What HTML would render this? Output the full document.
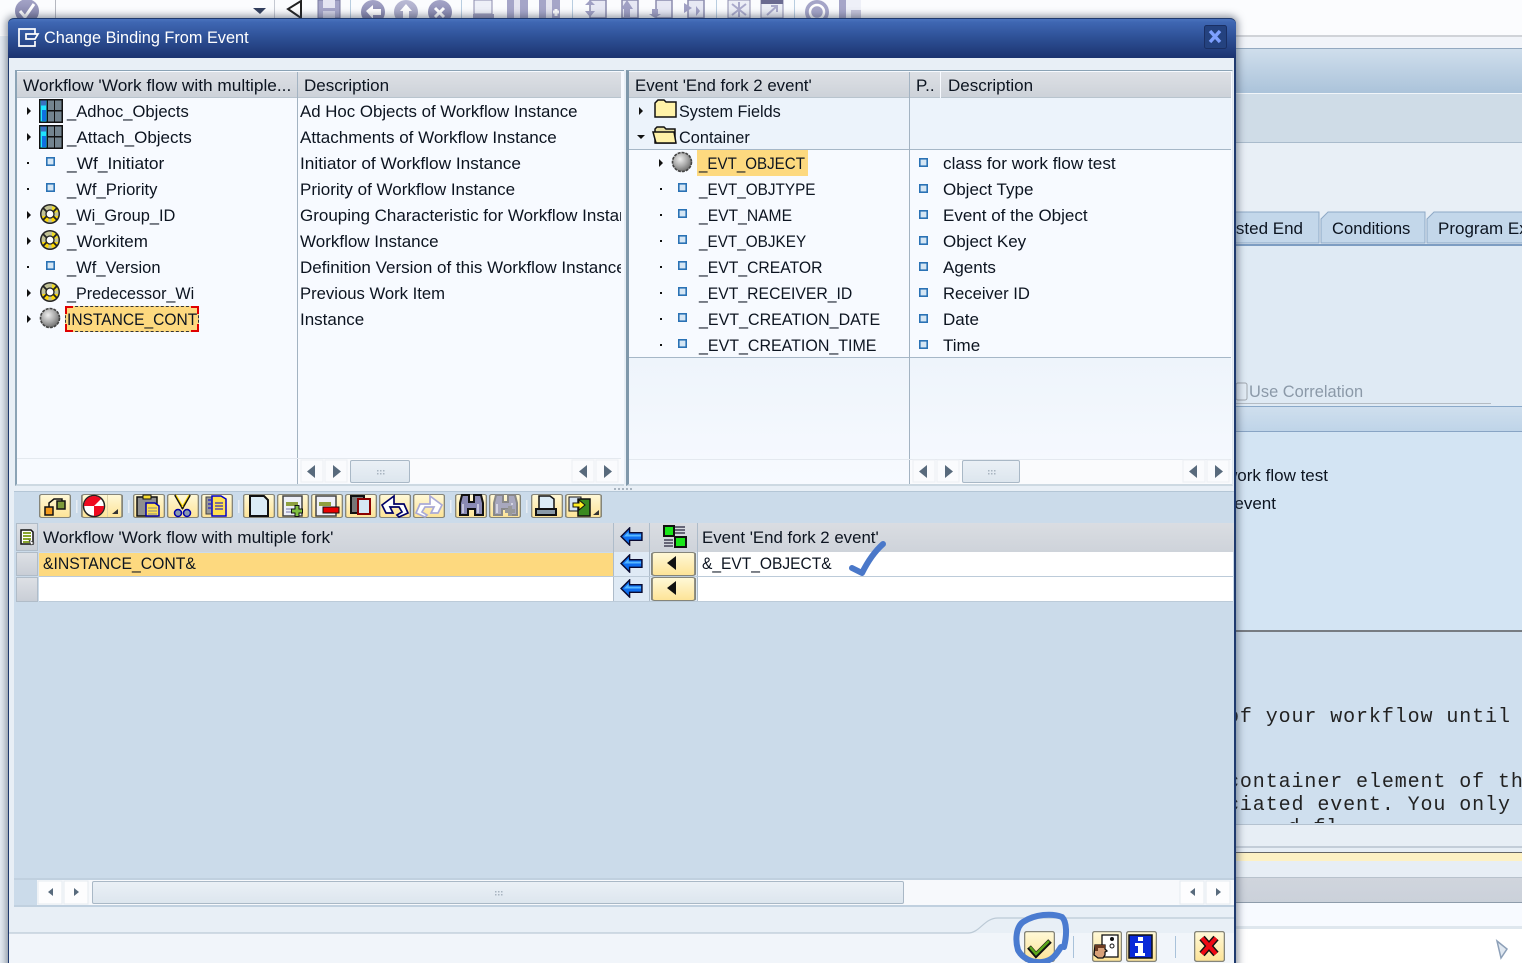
<!DOCTYPE html>
<html><head><meta charset="utf-8"><title>Change Binding From Event</title>
<style>
html,body{margin:0;padding:0;width:1522px;height:963px;overflow:hidden;background:#fff}
body{position:relative;font-family:"Liberation Sans",sans-serif;color:#0c1420}
.b{position:absolute}
.t{position:absolute;white-space:nowrap;font-size:17px;line-height:26px;height:26px;transform-origin:0 0}
svg{position:absolute;left:0;top:0}
.m{position:absolute;white-space:pre;font-family:"Liberation Mono",monospace;font-size:20px;letter-spacing:.9px;line-height:22px;color:#222}
</style></head><body>

<!-- background application -->
<div class="b" style="left:0;top:0;width:1522px;height:35px;background:#fbfcfe"></div>
<div class="b" style="left:1236px;top:35px;width:286px;height:2px;background:#d0d3d8"></div>
<div class="b" style="left:1236px;top:37px;width:286px;height:11px;background:#f1f4f9"></div>
<div class="b" style="left:1236px;top:48px;width:286px;height:45px;background:linear-gradient(#cfdeec,#abc3da);border-top:1px solid #93a9c0;box-sizing:border-box"></div>
<div class="b" style="left:1236px;top:93px;width:286px;height:50px;background:#cfdce7;border-top:1px solid #f1f5f9;border-bottom:1px solid #a9bbcc;box-sizing:border-box"></div>
<div class="b" style="left:1236px;top:143px;width:286px;height:101px;background:#e8eff6"></div>
<div class="b" style="left:1236px;top:244px;width:286px;height:162px;background:#dfeaf4;border-top:2px solid #7d9dc2;box-sizing:border-box"></div>
<div class="b" style="left:1236px;top:406px;width:286px;height:26px;background:linear-gradient(#cfdfee,#bfd4e8);border-top:1px solid #8aa9c9;border-bottom:1px solid #88a4c4;box-sizing:border-box"></div>
<div class="b" style="left:1236px;top:432px;width:286px;height:198px;background:#d3e4f3"></div>
<div class="b" style="left:1236px;top:630px;width:286px;height:2px;background:#777c82"></div>
<div class="b" style="left:1236px;top:632px;width:286px;height:192px;background:#cfdfee"></div>
<div class="b" style="left:1236px;top:824px;width:286px;height:105px;background:#e7eef5;border-top:1px solid #b4c2d0;box-sizing:border-box"></div>
<div class="b" style="left:1236px;top:846px;width:286px;height:2px;background:#c3cdd8"></div>
<div class="b" style="left:1236px;top:852px;width:286px;height:1px;background:#666"></div>
<div class="b" style="left:1236px;top:853px;width:286px;height:8px;background:#fdf1c4"></div>
<div class="b" style="left:1236px;top:877px;width:286px;height:26px;background:linear-gradient(#d0d5dd,#cbd1da);border-top:1px solid #b8c2cc;border-bottom:1px solid #8e9cab;box-sizing:border-box"></div>
<div class="b" style="left:1236px;top:903px;width:286px;height:23px;background:#f7faff"></div>
<div class="b" style="left:1236px;top:926px;width:286px;height:3px;background:#dfe7ee"></div>
<div class="b" style="left:1236px;top:929px;width:286px;height:34px;background:#fff"></div>
<div class="b" style="left:0;top:36px;width:8px;height:927px;background:#e8eff6"></div>

<svg width="1522" height="18" viewBox="0 0 1522 18" style="height:18px">
<defs><linearGradient id="gg" x1="0" y1="0" x2="0" y2="1"><stop offset="0" stop-color="#a5a5c8"/><stop offset="1" stop-color="#7a7aa2"/></linearGradient></defs>
<circle cx="27" cy="11" r="12" fill="url(#gg)"/><path d="M20 11l5 6 9-13" stroke="#fff" stroke-width="3" fill="none"/>
<rect x="55" y="0" width="1" height="18" fill="#b5b8c0"/>
<path d="M253 8h13l-6 6z" fill="#33405e"/><rect x="274" y="0" width="1" height="18" fill="#c5c9d2"/>
<path d="M301 1v17l-13-9z" fill="#fff" stroke="#222" stroke-width="2"/>
<rect x="318" y="0" width="22" height="18" fill="#a5a5c8" stroke="#7a7aa0"/><rect x="323" y="0" width="12" height="8" fill="#e5e5f2"/><rect x="323" y="11" width="12" height="7" fill="#d0d0e4"/>
<rect x="350" y="0" width="1" height="18" fill="#b8cde0"/>
<circle cx="373" cy="12" r="12" fill="url(#gg)"/><path d="M366 11l7-6v4h8v6h-8v4z" fill="#fff"/>
<circle cx="406" cy="12" r="12" fill="url(#gg)" opacity=".75"/><path d="M406 4l6 7h-3v7h-6v-7h-3z" fill="#fff"/>
<circle cx="440" cy="12" r="12" fill="url(#gg)"/><path d="M435 8l9 9M444 8l-9 9" stroke="#fff" stroke-width="3"/>
<rect x="461" y="0" width="1" height="18" fill="#b8cde0"/>
<path d="M474 0h18v14h-18z" fill="#eef0f8" stroke="#8c8cae"/><rect x="473" y="14" width="21" height="4" fill="#9c9cbc"/>
<rect x="507" y="0" width="21" height="18" fill="#a5a5c8"/><rect x="514" y="0" width="6" height="18" fill="#e4e4f0"/>
<rect x="539" y="0" width="21" height="18" fill="#a5a5c8"/><rect x="546" y="0" width="6" height="18" fill="#e4e4f0"/><path d="M553 12h6M556 9v7" stroke="#fff" stroke-width="3"/>
<rect x="572" y="0" width="1" height="18" fill="#b8cde0"/>
<g fill="#e7e8f4" stroke="#8c8cae" stroke-width="1.5"><path d="M590 0h16v18h-16z"/><path d="M622 0h16v18h-16z"/><path d="M656 0h16v18h-16z"/><path d="M688 0h16v18h-16z"/></g>
<g fill="#a0a0c4"><path d="M585 5l5-5 5 5zM585 11h10l-5 6z"/><path d="M621 9l6-9 6 9h-3v9h-6v-9z"/><path d="M652 9h6v5h3l-6 4-6-4h3z"/><path d="M684 3l8 5-8 5zM696 6l4 5-4 5z"/></g>
<rect x="716" y="0" width="1" height="18" fill="#b8cde0"/>
<rect x="728" y="0" width="22" height="18" fill="#eceef6" stroke="#8c8cae"/><path d="M732 4l14 11M746 4l-14 11M739 2v15" stroke="#aaaacb" stroke-width="2"/>
<rect x="761" y="0" width="22" height="18" fill="#eceef6" stroke="#8c8cae"/><rect x="761" y="0" width="22" height="4" fill="#6a6a90"/><path d="M767 15l10-9M771 6h6v6" stroke="#aaaacb" stroke-width="2" fill="none"/>
<rect x="794" y="0" width="1" height="18" fill="#b8cde0"/>
<circle cx="817" cy="12" r="12" fill="#a5a5c8"/><circle cx="817" cy="12" r="7" fill="none" stroke="#fff" stroke-width="2.5"/>
<rect x="839" y="0" width="22" height="18" fill="#a5a5c8"/><rect x="846" y="0" width="15" height="18" fill="#eef0f8"/><rect x="851" y="10" width="10" height="8" fill="#c5c5da"/>
</svg>

<!-- right-side text -->
<svg width="1522" height="963" viewBox="0 0 1522 963">
<g fill="#c3d7ea" stroke="#8ea9c6"><path d="M1200 243v-31h119v31z"/><path d="M1321 243v-24l7-7h97v31z"/><path d="M1427 243v-24l7-7h100v31z"/></g>
<rect x="1236" y="383" width="11" height="17" rx="2" fill="#e3ecf5" stroke="#a0a6ae"/>
<rect x="1236" y="403" width="255" height="1" fill="#b4bcc4"/>
<path d="M1497 941l10 8-6 9z" fill="#dfe7f0" stroke="#8da0b8" stroke-width="1.5"/>
</svg>
<div class="t" style="right:219px;top:216px">Suggested End</div>
<div class="t" style="left:1332px;top:216px;transform:scaleX(.975)">Conditions</div>
<div class="t" style="left:1438px;top:216px">Program Exits</div>
<div class="t" style="left:1249px;top:379px;color:#8b99a8;transform:scaleX(.966)">Use Correlation</div>
<div class="t" style="right:194px;top:463px">class for work flow test</div>
<div class="t" style="right:246px;top:491px">End fork 2 event</div>
<div class="m" style="left:1227px;top:707px">of your workflow until</div>
<div class="m" style="left:1227px;top:772px">container element of the</div>
<div class="m" style="left:1227px;top:795px">ciated event. You only</div>
<div class="b" style="left:1236px;top:815px;width:286px;height:8px;overflow:hidden"><div class="m" style="left:-13px;top:3px">     d fl</div></div>

<!-- dialog -->
<div class="b" style="left:8px;top:18px;width:1228px;height:960px;background:#e8eff6;border-radius:6px 6px 0 0;box-shadow:0 0 8px 2px rgba(50,60,80,.55);border-left:1px solid #1f3a6e;border-right:2px solid #1f3a6e;box-sizing:border-box"></div>
<div class="b" style="left:8px;top:18px;width:1228px;height:40px;background:linear-gradient(#4a73bd 0,#3f67b3 8%,#2f5298 45%,#1b336f 100%);border-radius:6px 6px 0 0;border-top:1px solid #1f3a6e;box-sizing:border-box"></div>
<div class="t" style="left:44px;top:25px;color:#fff;transform:scaleX(.958)">Change Binding From Event</div>

<!-- left tree panel -->
<div class="b" style="left:15px;top:70px;width:609px;height:416px;background:#f7faff;border:1px solid #8ba3b5;border-left:2px solid #8ba3b5;border-right:0;border-bottom:2px solid #cdd9e2;box-sizing:border-box"></div>
<div class="b" style="left:17px;top:72px;width:280px;height:26px;background:linear-gradient(#dde0e5,#cdd2d9);border-bottom:1px solid #b8c4ce;box-sizing:border-box"></div>
<div class="b" style="left:298px;top:72px;width:323px;height:26px;background:linear-gradient(#dde0e5,#cdd2d9);border-bottom:1px solid #b8c4ce;box-sizing:border-box"></div>
<div class="b" style="left:297px;top:72px;width:1px;height:412px;background:#a3b3c2"></div>
<div class="b" style="left:17px;top:458px;width:604px;height:1px;background:#e4e9ef"></div>
<div class="b" style="left:298px;top:459px;width:323px;height:24px;background:#fafbfd"></div>

<!-- right tree panel -->
<div class="b" style="left:626px;top:70px;width:607px;height:416px;background:#f7faff;border:1px solid #8ba3b5;border-left:3px solid #7f98ab;border-bottom:2px solid #cdd9e2;border-right:1px solid #e0e7ee;box-sizing:border-box"></div>
<div class="b" style="left:629px;top:98px;width:602px;height:52px;background:#ecf3fb;border-bottom:1px solid #a6b7c7;box-sizing:border-box"></div>
<div class="b" style="left:629px;top:357px;width:602px;height:127px;background:linear-gradient(#eef4fb,#f7faff);border-top:1px solid #a6b7c7;box-sizing:border-box"></div>
<div class="b" style="left:629px;top:72px;width:280px;height:26px;background:linear-gradient(#dde0e5,#cdd2d9);border-bottom:1px solid #b8c4ce;box-sizing:border-box"></div>
<div class="b" style="left:910px;top:72px;width:30px;height:26px;background:linear-gradient(#dde0e5,#cdd2d9);border-bottom:1px solid #b8c4ce;box-sizing:border-box"></div>
<div class="b" style="left:941px;top:72px;width:290px;height:26px;background:linear-gradient(#dde0e5,#cdd2d9);border-bottom:1px solid #b8c4ce;box-sizing:border-box"></div>
<div class="b" style="left:909px;top:72px;width:1px;height:412px;background:#a3b3c2"></div>
<div class="b" style="left:629px;top:459px;width:602px;height:1px;background:#e4e9ef"></div>
<div class="b" style="left:910px;top:460px;width:321px;height:24px;background:#fafbfd"></div>

<!-- highlights -->
<div class="b" style="left:65px;top:306px;width:134px;height:26px;background:#fdd97f;border:1px dashed #333;box-sizing:border-box"></div>
<div class="b" style="left:697px;top:150px;width:111px;height:26px;background:#fdd97f"></div>

<!-- left text -->
<div class="t" style="left:23px;top:73px;transform:scaleX(1.015)">Workflow 'Work flow with multiple...</div>
<div class="t" style="left:304px;top:73px">Description</div>
<div class="t" style="left:67px;top:99px;transform:scaleX(.976)">_Adhoc_Objects</div>
<div class="t" style="left:67px;top:125px">_Attach_Objects</div>
<div class="t" style="left:67px;top:151px;transform:scaleX(1.02)">_Wf_Initiator</div>
<div class="t" style="left:67px;top:177px;transform:scaleX(.977)">_Wf_Priority</div>
<div class="t" style="left:67px;top:203px;transform:scaleX(.964)">_Wi_Group_ID</div>
<div class="t" style="left:67px;top:229px">_Workitem</div>
<div class="t" style="left:67px;top:255px;transform:scaleX(.97)">_Wf_Version</div>
<div class="t" style="left:67px;top:281px;transform:scaleX(.948)">_Predecessor_Wi</div>
<div class="t" style="left:67px;top:307px;transform:scaleX(.915)">INSTANCE_CONT</div>
<div class="b" style="left:300px;top:99px;width:321px;height:234px;overflow:hidden">
<div class="t" style="left:0;top:0;transform:scaleX(.99)">Ad Hoc Objects of Workflow Instance</div>
<div class="t" style="left:0;top:26px">Attachments of Workflow Instance</div>
<div class="t" style="left:0;top:52px;transform:scaleX(1.014)">Initiator of Workflow Instance</div>
<div class="t" style="left:0;top:78px">Priority of Workflow Instance</div>
<div class="t" style="left:0;top:104px">Grouping Characteristic for Workflow Instance</div>
<div class="t" style="left:0;top:130px">Workflow Instance</div>
<div class="t" style="left:0;top:156px">Definition Version of this Workflow Instance</div>
<div class="t" style="left:0;top:182px;transform:scaleX(.98)">Previous Work Item</div>
<div class="t" style="left:0;top:208px">Instance</div>
</div>

<!-- right text -->
<div class="t" style="left:635px;top:73px;transform:scaleX(.99)">Event 'End fork 2 event'</div>
<div class="t" style="left:916px;top:73px">P..</div>
<div class="t" style="left:948px;top:73px">Description</div>
<div class="t" style="left:679px;top:99px;transform:scaleX(.953)">System Fields</div>
<div class="t" style="left:679px;top:125px;transform:scaleX(.96)">Container</div>
<div class="t" style="left:699px;top:151px;transform:scaleX(.89)">_EVT_OBJECT</div>
<div class="t" style="left:699px;top:177px;transform:scaleX(.90)">_EVT_OBJTYPE</div>
<div class="t" style="left:699px;top:203px;transform:scaleX(.92)">_EVT_NAME</div>
<div class="t" style="left:699px;top:229px;transform:scaleX(.90)">_EVT_OBJKEY</div>
<div class="t" style="left:699px;top:255px;transform:scaleX(.925)">_EVT_CREATOR</div>
<div class="t" style="left:699px;top:281px;transform:scaleX(.927)">_EVT_RECEIVER_ID</div>
<div class="t" style="left:699px;top:307px;transform:scaleX(.943)">_EVT_CREATION_DATE</div>
<div class="t" style="left:699px;top:333px;transform:scaleX(.941)">_EVT_CREATION_TIME</div>
<div class="t" style="left:943px;top:151px;transform:scaleX(1.01)">class for work flow test</div>
<div class="t" style="left:943px;top:177px;transform:scaleX(1)">Object Type</div>
<div class="t" style="left:943px;top:203px;transform:scaleX(1)">Event of the Object</div>
<div class="t" style="left:943px;top:229px">Object Key</div>
<div class="t" style="left:943px;top:255px">Agents</div>
<div class="t" style="left:943px;top:281px;transform:scaleX(.978)">Receiver ID</div>
<div class="t" style="left:943px;top:307px">Date</div>
<div class="t" style="left:943px;top:333px">Time</div>

<!-- lower panel -->
<div class="b" style="left:14px;top:491px;width:1220px;height:388px;background:#cbdbea;border-top:1px solid #b4c6d6;box-sizing:border-box"></div>
<div class="b" style="left:16px;top:523px;width:22px;height:28px;background:linear-gradient(#dde0e5,#c9ced6);border:1px solid #b0bcc8;box-sizing:border-box"></div>
<div class="b" style="left:16px;top:552px;width:22px;height:24px;background:linear-gradient(#dde0e5,#c9ced6);border:1px solid #b0bcc8;box-sizing:border-box"></div>
<div class="b" style="left:16px;top:577px;width:22px;height:25px;background:linear-gradient(#dde0e5,#c9ced6);border:1px solid #b0bcc8;box-sizing:border-box"></div>
<div class="b" style="left:39px;top:523px;width:1195px;height:29px;background:linear-gradient(#dadde2,#ced3da)"></div>
<div class="b" style="left:39px;top:553px;width:574px;height:23px;background:#fdd97f"></div>
<div class="b" style="left:39px;top:577px;width:574px;height:24px;background:#fff"></div>
<div class="b" style="left:613px;top:523px;width:1px;height:79px;background:#aebcca"></div>
<div class="b" style="left:614px;top:552px;width:35px;height:50px;background:#dfeaf5"></div>
<div class="b" style="left:649px;top:523px;width:1px;height:79px;background:#aebcca"></div>
<div class="b" style="left:650px;top:552px;width:47px;height:50px;background:#dfeaf5"></div>
<div class="b" style="left:697px;top:523px;width:1px;height:79px;background:#aebcca"></div>
<div class="b" style="left:698px;top:552px;width:535px;height:24px;background:#fff"></div>
<div class="b" style="left:698px;top:577px;width:535px;height:24px;background:#fff"></div>
<div class="b" style="left:39px;top:576px;width:1194px;height:1px;background:#bccbd9"></div>
<div class="b" style="left:39px;top:601px;width:1194px;height:1px;background:#bccbd9"></div>
<div class="b" style="left:14px;top:878px;width:1220px;height:29px;background:#f7f9fc;border-top:2px solid #c0d0df;border-bottom:2px solid #c0d0df;box-sizing:border-box"></div>
<div class="b" style="left:14px;top:880px;width:23px;height:25px;background:#cbdbea"></div>
<div class="b" style="left:92px;top:881px;width:812px;height:23px;background:linear-gradient(#eaf0f6,#dde6ee);border:1px solid #a9b8c6;border-radius:2px;box-sizing:border-box"></div>
<div class="b" style="left:350px;top:460px;width:60px;height:23px;background:linear-gradient(#eaf0f6,#dde6ee);border:1px solid #a9b8c6;border-radius:2px;box-sizing:border-box"></div>
<div class="b" style="left:962px;top:460px;width:58px;height:23px;background:linear-gradient(#eaf0f6,#dde6ee);border:1px solid #a9b8c6;border-radius:2px;box-sizing:border-box"></div>

<div class="t" style="left:43px;top:525px;transform:scaleX(1.014)">Workflow 'Work flow with multiple fork'</div>
<div class="t" style="left:702px;top:525px;transform:scaleX(.99)">Event 'End fork 2 event'</div>
<div class="t" style="left:43px;top:551px;transform:scaleX(.927)">&amp;INSTANCE_CONT&amp;</div>
<div class="t" style="left:702px;top:551px;transform:scaleX(.915)">&amp;_EVT_OBJECT&amp;</div>

<!-- footer -->
<div class="b" style="left:9px;top:933px;width:1225px;height:30px;background:#f1f5fa"></div>

<svg width="1522" height="963" viewBox="0 0 1522 963">
<defs>
<linearGradient id="by" x1="0" y1="0" x2="0" y2="1"><stop offset="0" stop-color="#fff9d8"/><stop offset="1" stop-color="#fde396"/></linearGradient>
<radialGradient id="ball" cx=".4" cy=".35" r=".7"><stop offset="0" stop-color="#eeeeee"/><stop offset=".55" stop-color="#a8a8a8"/><stop offset="1" stop-color="#666"/></radialGradient>
<symbol id="tb" viewBox="0 0 24 24" overflow="visible"><rect x="0" y="0" width="24" height="24" fill="#111"/><rect x="1.5" y="1.5" width="6" height="21" fill="#1fe4ff"/><rect x="2" y="1.5" width="5" height="5" fill="#3a6fc0"/><rect x="3" y="11" width="4" height="11" fill="#1070e0"/><rect x="9" y="1.5" width="6" height="9.5" fill="#73848f"/><rect x="16" y="1.5" width="6.5" height="9.5" fill="#73848f"/><rect x="9" y="12.5" width="6" height="10" fill="#73848f"/><rect x="16" y="12.5" width="6.5" height="10" fill="#73848f"/></symbol>
<symbol id="sq" viewBox="0 0 9 9"><rect x=".8" y=".8" width="7.4" height="7.400" fill="#d5e6f4" stroke="#2a72b5" stroke-width="1.600"/></symbol>
<symbol id="wh" viewBox="0 0 22 22"><circle cx="11" cy="11" r="10" fill="#222"/><circle cx="11" cy="11" r="8.500" fill="#c2c296"/><path d="M19 13a8.500 8.500 0 0 1-6 6l-1-4 3-2z" fill="#ffd800"/><path d="M3 13a8.500 8.500 0 0 0 6 6l1-4-3-2z" fill="#ffd800"/><path d="M13 3a8.500 8.500 0 0 1 6 6l-4 1-2-3z" fill="#f0dc20"/><path d="M4 5l4 4M18 5l-4 4M4 17l4-4M18 17l-4-4" stroke="#222" stroke-width="1.800"/><circle cx="11" cy="11" r="4" fill="#fff" stroke="#222" stroke-width="1.300"/></symbol>
<symbol id="bl" viewBox="0 0 22 22"><circle cx="11" cy="11" r="9.500" fill="url(#ball)" stroke="#444" stroke-width="1.600" stroke-dasharray="3 1"/></symbol>
<symbol id="arr" viewBox="0 0 24 20"><path d="M1 10l9-9v5h13v8H10v5z" fill="#0f6ff0" stroke="#0a0a30" stroke-width="1.500"/><path d="M4 10l5-5v3h13v2z" fill="#58b9ff"/></symbol>
<symbol id="ybtn" viewBox="0 0 30 30" preserveAspectRatio="none"><rect x=".6" y=".6" width="28.800" height="28.800" rx="2" fill="url(#by)" stroke="#85857a" stroke-width="1.300"/></symbol>
</defs>

<!-- dialog title icons -->
<g fill="none" stroke="#fff" stroke-width="1.700"><path d="M35 34v-5H19v17h16v-5"/><path d="M26 34h12l-3 5H26z"/></g>
<rect x="1204.500" y="25.500" width="22" height="23" rx="2" fill="#24427f" stroke="#1a2f63"/>
<path d="M1210 31l10 11M1220 31l-10 11" stroke="#7ea0ff" stroke-width="3.400"/>

<!-- tree expanders -->
<g fill="#111"><path d="M27 107l4 4-4 4zM27 133l4 4-4 4zM27 211l4 4-4 4zM27 237l4 4-4 4zM27 289l4 4-4 4zM27 315l4 4-4 4zM639 107l4 4-4 4zM637 135l8 0-4 4zM659 159l4 4-4 4z"/>
<rect x="27" y="162" width="2" height="2"/><rect x="27" y="188" width="2" height="2"/><rect x="27" y="266" width="2" height="2"/>
<rect x="660" y="188" width="2" height="2"/><rect x="660" y="214" width="2" height="2"/><rect x="660" y="240" width="2" height="2"/><rect x="660" y="266" width="2" height="2"/><rect x="660" y="292" width="2" height="2"/><rect x="660" y="318" width="2" height="2"/><rect x="660" y="344" width="2" height="2"/></g>
<use href="#tb" x="39" y="99" width="24" height="24"/><use href="#tb" x="39" y="125" width="24" height="24"/>
<use href="#sq" x="46" y="157" width="9" height="9"/><use href="#sq" x="46" y="183" width="9" height="9"/><use href="#sq" x="46" y="261" width="9" height="9"/>
<use href="#wh" x="39" y="203" width="22" height="22"/><use href="#wh" x="39" y="229" width="22" height="22"/><use href="#wh" x="39" y="281" width="22" height="22"/>
<use href="#bl" x="39" y="307" width="22" height="22"/><use href="#bl" x="671" y="151" width="22" height="22"/>
<g fill="none" stroke="#e00000" stroke-width="2"><path d="M66 314v-7h7M191 307h7v7M66 324v7h7M191 331h7v-7"/></g>
<use href="#sq" x="678" y="183" width="9" height="9"/><use href="#sq" x="678" y="209" width="9" height="9"/><use href="#sq" x="678" y="235" width="9" height="9"/><use href="#sq" x="678" y="261" width="9" height="9"/><use href="#sq" x="678" y="287" width="9" height="9"/><use href="#sq" x="678" y="313" width="9" height="9"/><use href="#sq" x="678" y="339" width="9" height="9"/>
<use href="#sq" x="919" y="158" width="9" height="9"/><use href="#sq" x="919" y="184" width="9" height="9"/><use href="#sq" x="919" y="210" width="9" height="9"/><use href="#sq" x="919" y="236" width="9" height="9"/><use href="#sq" x="919" y="262" width="9" height="9"/><use href="#sq" x="919" y="288" width="9" height="9"/><use href="#sq" x="919" y="314" width="9" height="9"/><use href="#sq" x="919" y="340" width="9" height="9"/>
<!-- folders -->
<path d="M655 117v-14l3-3h6l2 2h10v15z" fill="#fff2a8" stroke="#111" stroke-width="1.500"/>
<path d="M655 143v-14l2-2h7l2 2h9v14z" fill="#e8e0a0" stroke="#111" stroke-width="1.500"/><path d="M653 132h21l2 11h-20z" fill="#fff2a8" stroke="#111" stroke-width="1.500"/>

<!-- scroll buttons and arrows -->
<g fill="none" stroke="#eceff3"><rect x="301" y="460" width="22" height="22"/><rect x="325" y="460" width="22" height="22"/><rect x="572" y="460" width="22" height="22"/><rect x="596" y="460" width="22" height="22"/><rect x="913" y="460" width="22" height="22"/><rect x="937" y="460" width="22" height="22"/><rect x="1183" y="460" width="22" height="22"/><rect x="1207" y="460" width="22" height="22"/></g>
<g fill="#fdfdfe" stroke="#e5eaf0"><rect x="38" y="881" width="24" height="23"/><rect x="64" y="881" width="24" height="23"/><rect x="1180" y="881" width="24" height="23"/><rect x="1206" y="881" width="24" height="23"/></g>
<g fill="#586a7c"><path d="M315 465v13l-8-6.500zM333 465v13l8-6.500zM587 465v13l-8-6.500zM604 465v13l8-6.500zM927 465v13l-8-6.500zM945 465v13l8-6.500zM1197 465v13l-8-6.500zM1215 465v13l8-6.500z"/><path d="M53 888v8l-5-4zM74 888v8l5-4zM1195 888v8l-5-4zM1216 888v8l5-4z"/></g>
<g fill="#a8b4c0"><rect x="377" y="470" width="1.500" height="1.500"/><rect x="380" y="470" width="1.500" height="1.500"/><rect x="383" y="470" width="1.500" height="1.500"/><rect x="377" y="473" width="1.500" height="1.500"/><rect x="380" y="473" width="1.500" height="1.500"/><rect x="383" y="473" width="1.500" height="1.500"/><rect x="988" y="470" width="1.500" height="1.500"/><rect x="991" y="470" width="1.500" height="1.500"/><rect x="994" y="470" width="1.500" height="1.500"/><rect x="988" y="473" width="1.500" height="1.500"/><rect x="991" y="473" width="1.500" height="1.500"/><rect x="994" y="473" width="1.500" height="1.500"/><rect x="495" y="891" width="1.500" height="1.500"/><rect x="498" y="891" width="1.500" height="1.500"/><rect x="501" y="891" width="1.500" height="1.500"/><rect x="495" y="894" width="1.500" height="1.500"/><rect x="498" y="894" width="1.500" height="1.500"/><rect x="501" y="894" width="1.500" height="1.500"/><rect x="614" y="488" width="2" height="2"/><rect x="618" y="488" width="2" height="2"/><rect x="622" y="488" width="2" height="2"/><rect x="626" y="488" width="2" height="2"/><rect x="630" y="488" width="2" height="2"/></g>

<!-- toolbar buttons -->
<use href="#ybtn" x="39" y="494" width="32" height="24"/>
<use href="#ybtn" x="81" y="494" width="42" height="24"/>
<use href="#ybtn" x="133" y="494" width="32" height="24"/>
<use href="#ybtn" x="167" y="494" width="32" height="24"/>
<use href="#ybtn" x="201" y="494" width="32" height="24"/>
<use href="#ybtn" x="243" y="494" width="32" height="24"/>
<use href="#ybtn" x="277" y="494" width="32" height="24"/>
<use href="#ybtn" x="311" y="494" width="32" height="24"/>
<use href="#ybtn" x="345" y="494" width="32" height="24"/>
<use href="#ybtn" x="379" y="494" width="32" height="24"/>
<use href="#ybtn" x="413" y="494" width="32" height="24"/>
<use href="#ybtn" x="455" y="494" width="32" height="24"/>
<use href="#ybtn" x="489" y="494" width="32" height="24"/>
<use href="#ybtn" x="531" y="494" width="32" height="24"/>
<use href="#ybtn" x="565" y="494" width="37" height="24"/>
<g fill="#e8eef4"><rect x="76" y="500" width="1.500" height="13"/><rect x="128" y="500" width="1.500" height="13"/><rect x="238" y="500" width="1.500" height="13"/><rect x="450" y="500" width="1.500" height="13"/><rect x="526" y="500" width="1.500" height="13"/></g>
<!-- hierarchy -->
<rect x="45" y="507" width="8" height="8" fill="#f39a1c" stroke="#111" stroke-width="1.500"/><rect x="57" y="501" width="8" height="8" fill="#7d9a3a" stroke="#111" stroke-width="1.500"/><path d="M49 507v-4l5-4h8v2" fill="none" stroke="#111" stroke-width="1.500"/>
<!-- record -->
<circle cx="94" cy="506" r="10.500" fill="#fff" stroke="#222" stroke-width="1.500"/><path d="M84 506a10 10 0 0 1 10-10v10zM104 506a10 10 0 0 1-10 10v-10z" fill="#ee0a20"/><path d="M94 496a10 10 0 0 1 7 3l-7 7z" fill="#ee0a20"/><path d="M112 514h6v-5z" fill="#333"/><rect x="107" y="495" width="1" height="22" fill="#ddd4a8"/>
<!-- paste -->
<rect x="137" y="497" width="20" height="19" fill="#8f8f8f" stroke="#111" stroke-width="1.500"/><rect x="143" y="495" width="8" height="4" fill="#f7dd30" stroke="#111"/><path d="M146 503h9l4 3v10h-13z" fill="#ffe050" stroke="#00a" stroke-width="1.500"/><path d="M148 508h9M148 511h9M148 514h9" stroke="#888"/>
<!-- cut -->
<path d="M175 495l8 14M190 495l-8 14" stroke="#111" stroke-width="2"/><path d="M176 495l7 12M189 495l-7 12" stroke="#ffd800" stroke-width="1"/><ellipse cx="178" cy="513" rx="3.500" ry="3.500" fill="#8a9ab0" stroke="#00a" stroke-width="1.500"/><ellipse cx="187" cy="513" rx="3.500" ry="3.500" fill="#8a9ab0" stroke="#00a" stroke-width="1.500"/>
<!-- copy -->
<rect x="206" y="497" width="14" height="17" fill="#999" stroke="#444"/><path d="M212 496h9l5 3v17h-14z" fill="#ffe050" stroke="#00c" stroke-width="1.500"/><path d="M208 500h3M208 504h3M208 508h3M215 503h8M215 506h8M215 509h8" stroke="#00c"/>
<!-- new -->
<path d="M250 496h14l4 4v16h-18z" fill="#dcecf6" stroke="#111" stroke-width="2"/>
<!-- add row -->
<rect x="283" y="496" width="19" height="20" fill="#eef0f8" stroke="#444" stroke-width="1.500"/><rect x="286" y="502" width="12" height="4" fill="#8fa040"/><path d="M286 509h6M286 512h6" stroke="#77a"/><path d="M291 511h12M297 505v12" stroke="#111" stroke-width="5"/><path d="M292 511h10M297 506v10" stroke="#7fbf3f" stroke-width="3"/>
<!-- delete row -->
<rect x="316" y="496" width="20" height="20" fill="#eef0f8" stroke="#444" stroke-width="1.500"/><rect x="319" y="502" width="12" height="4" fill="#8fa040"/><rect x="323" y="507" width="16" height="6" fill="#e80000" stroke="#111"/>
<!-- copy row -->
<rect x="351" y="496" width="13" height="17" fill="#777" stroke="#111" stroke-width="2"/><rect x="358" y="499" width="12" height="15" fill="#d6e8f4" stroke="#8b0000" stroke-width="2"/>
<!-- undo / redo -->
<path d="M394 496l-12 9 4 8h7l-3-6h9l3 5-5 3 2 2 9-4-4-9h-10z" fill="#fff" stroke="#006" stroke-width="1.700"/>
<path d="M430 496l12 9-4 8h-7l3-6h-9l-3 5 5 3-2 2-9-4 4-9h10z" fill="#fff" stroke="#aaaad6" stroke-width="1.700"/>
<!-- find -->
<path d="M460 515v-12l2-8h7v7h5v-7h7l2 8v12h-8v-6h-7v6z" fill="#8a8ab4" stroke="#111" stroke-width="2"/><path d="M463 513v-9M478 513v-9" stroke="#d8d8ea" stroke-width="1.500"/>
<path d="M494 515v-12l2-8h7v7h5v-7h7l2 8v12h-8v-6h-7v6z" fill="#a8a8be" stroke="#888" stroke-width="2"/><path d="M497 513v-9M512 505v-2" stroke="#e4e4ee" stroke-width="1.500"/><path d="M505 511h10M510 506v10" stroke="#999" stroke-width="4"/>
<!-- print -->
<path d="M539 496h11l4 3v10h-15z" fill="#dcecf6" stroke="#111" stroke-width="1.500"/><rect x="536" y="509" width="20" height="6" fill="#8a9aa8" stroke="#111" stroke-width="2"/>
<!-- export -->
<path d="M569 497h12v14h-12z" fill="#d6e4f2" stroke="#111"/><rect x="578" y="499" width="12" height="17" fill="#3a8a20" stroke="#111" stroke-width="1.500"/><path d="M573 503h6v-3l6 5-6 5v-3h-6z" fill="#ffee22" stroke="#111"/><path d="M593 515h6v-5z" fill="#333"/>
<!-- table select icon -->
<path d="M21 530h10l2 2v12h-12z" fill="#fff" stroke="#111" stroke-width="1.500"/><path d="M23 533h8M23 536h8M23 539h8M23 542h8" stroke="#7a9a10" stroke-width="1.800"/><path d="M29 540l5 3-3 2z" fill="#fff" stroke="#333" stroke-width=".6"/>
<!-- arrows -->
<use href="#arr" x="620" y="527" width="23" height="19"/><use href="#arr" x="620" y="554" width="23" height="19"/><use href="#arr" x="620" y="579" width="23" height="19"/>
<!-- map icon -->
<rect x="664" y="526" width="10" height="10" fill="#19e619" stroke="#111" stroke-width="2"/><rect x="675" y="526" width="10" height="2" fill="#667"/><rect x="675" y="529" width="10" height="2" fill="#667"/><rect x="675" y="532" width="10" height="2" fill="#667"/>
<rect x="664" y="539" width="9" height="2" fill="#667"/><rect x="664" y="542" width="9" height="2" fill="#667"/><rect x="664" y="545" width="9" height="2" fill="#667"/><rect x="675" y="537" width="11" height="10" fill="#19e619" stroke="#111" stroke-width="2"/>
<use href="#ybtn" x="651" y="552" width="45" height="24"/><use href="#ybtn" x="651" y="577" width="45" height="24"/>
<path d="M676 556v14l-9-7zM676 581v14l-9-7z" fill="#111"/>
<!-- hand-drawn check -->
<path d="M852 568l10 5c5-10 12-21 21-29" fill="none" stroke="#4a78c9" stroke-width="6" stroke-linecap="round" stroke-linejoin="round"/>

<!-- footer curve -->
<path d="M9 933H968c12 0 16-15 30-15H1234" fill="none" stroke="#bccad6" stroke-width="1.200"/>
<rect x="1073" y="936" width="1" height="22" fill="#a9c2da"/><rect x="1175" y="936" width="1" height="22" fill="#a9c2da"/>
<use href="#ybtn" x="1024" y="931" width="31" height="31"/>
<use href="#ybtn" x="1092" y="931" width="30" height="31"/>
<use href="#ybtn" x="1126" y="931" width="31" height="31"/>
<use href="#ybtn" x="1194" y="931" width="31" height="31"/>
<path d="M1029 947l7 8 14-14" fill="none" stroke="#111" stroke-width="5"/><path d="M1030 947l6 7 13-13" fill="none" stroke="#5aa61a" stroke-width="2.500"/>
<rect x="1102" y="935" width="16" height="22" fill="#fff" stroke="#111" stroke-width="1.300"/><circle cx="1112" cy="939" r="2" fill="#111"/><circle cx="1112" cy="946" r="2" fill="none" stroke="#111"/>
<path d="M1095 945h10v4l2 2-2 1v3l-2 3h-5l-4-3z" fill="#d8a078" stroke="#111" stroke-width="1.300"/><path d="M1095 945h10v3h-7v3h-3z" fill="#6a3a20"/>
<rect x="1129" y="935" width="23" height="23" fill="#0a2ad8" stroke="#111" stroke-width="1.500"/><rect x="1138" y="937" width="5" height="4" fill="#fff"/><path d="M1135 943h8v10h2v3h-10v-3h3v-7h-3z" fill="#fff"/>
<path d="M1202 938l14 16M1216 938l-14 16" stroke="#111" stroke-width="7"/><path d="M1202 938l14 16M1216 938l-14 16" stroke="#ee0a14" stroke-width="4"/>
<!-- hand-drawn circle -->
<path d="M1064 947C1067 935 1067 922 1062 917C1052 913 1035 914 1023 922C1016 927 1015 940 1018 950C1022 958 1032 963 1042 962C1052 961 1056 955 1061 947" fill="none" stroke="#4a7bd0" stroke-width="6" stroke-linecap="round"/>
</svg>
</body></html>
